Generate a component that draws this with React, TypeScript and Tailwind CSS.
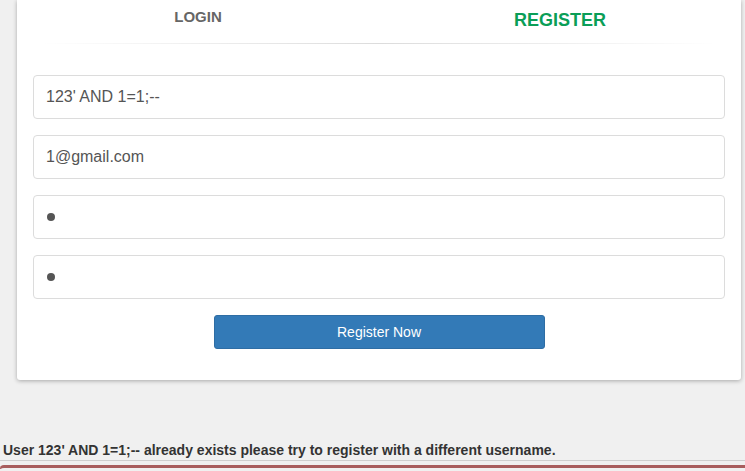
import React from 'react'

const font = { fontFamily: '"Liberation Sans", Arial, sans-serif' }

function Field({ value, secret }: { value?: string; secret?: boolean }) {
  return (
    <div className="h-[44px] border border-[#dcdcdc] rounded-[4px] bg-white px-3 flex items-center text-[16px] text-[#555]">
      {secret ? <span className="w-[8px] h-[8px] rounded-full bg-[#555] ml-px" /> : value}
    </div>
  )
}

export default function App() {
  return (
    <div className="min-h-[471px] bg-[#f0f0f0] overflow-hidden" style={font}>
      {/* Card */}
      <div className="ml-[17px] mr-[4px] bg-white rounded-b-[3px] shadow-[0_1px_4px_rgba(0,0,0,0.3)] pb-[31px]">
        {/* Tabs */}
        <div className="grid grid-cols-2 h-[43px]">
          <div className="flex justify-center pt-[6px]">
            <span className="text-[15px] font-bold text-[#666]">LOGIN</span>
          </div>
          <div className="flex justify-center pt-[7px]">
            <span className="text-[18px] font-bold text-[#0a9e57]">REGISTER</span>
          </div>
        </div>
        <div className="mx-[24px] grid grid-cols-2">
          <div className="h-px bg-gradient-to-r from-transparent to-[#dcdcdc]" />
          <div className="h-px bg-gradient-to-r from-[#dcdcdc] to-transparent" />
        </div>

        {/* Form */}
        <div className="px-4">
          <div className="mt-[31px] flex flex-col gap-4">
            <Field value="123' AND 1=1;--" />
            <Field value="1@gmail.com" />
            <Field secret />
            <Field secret />
          </div>
          <div className="flex justify-center mt-4">
            <button className="w-[331px] h-[34px] bg-[#337ab7] border border-[#2e6da4] rounded-[3px] text-white text-[14px]">
              Register Now
            </button>
          </div>
        </div>
      </div>

      {/* Message */}
      <p className="mt-[60px] pl-[3px] text-[14px] font-bold text-[#333] leading-[20px]">
        User 123' AND 1=1;-- already exists please try to register with a different username.
      </p>
      <div className="h-px bg-[#cfcfcf]" />
      <div className="mt-[4px] h-[4px] border-t-[3px] border-l-[1px] border-[#a85d5d] rounded-tl-[6px]" />
    </div>
  )
}
